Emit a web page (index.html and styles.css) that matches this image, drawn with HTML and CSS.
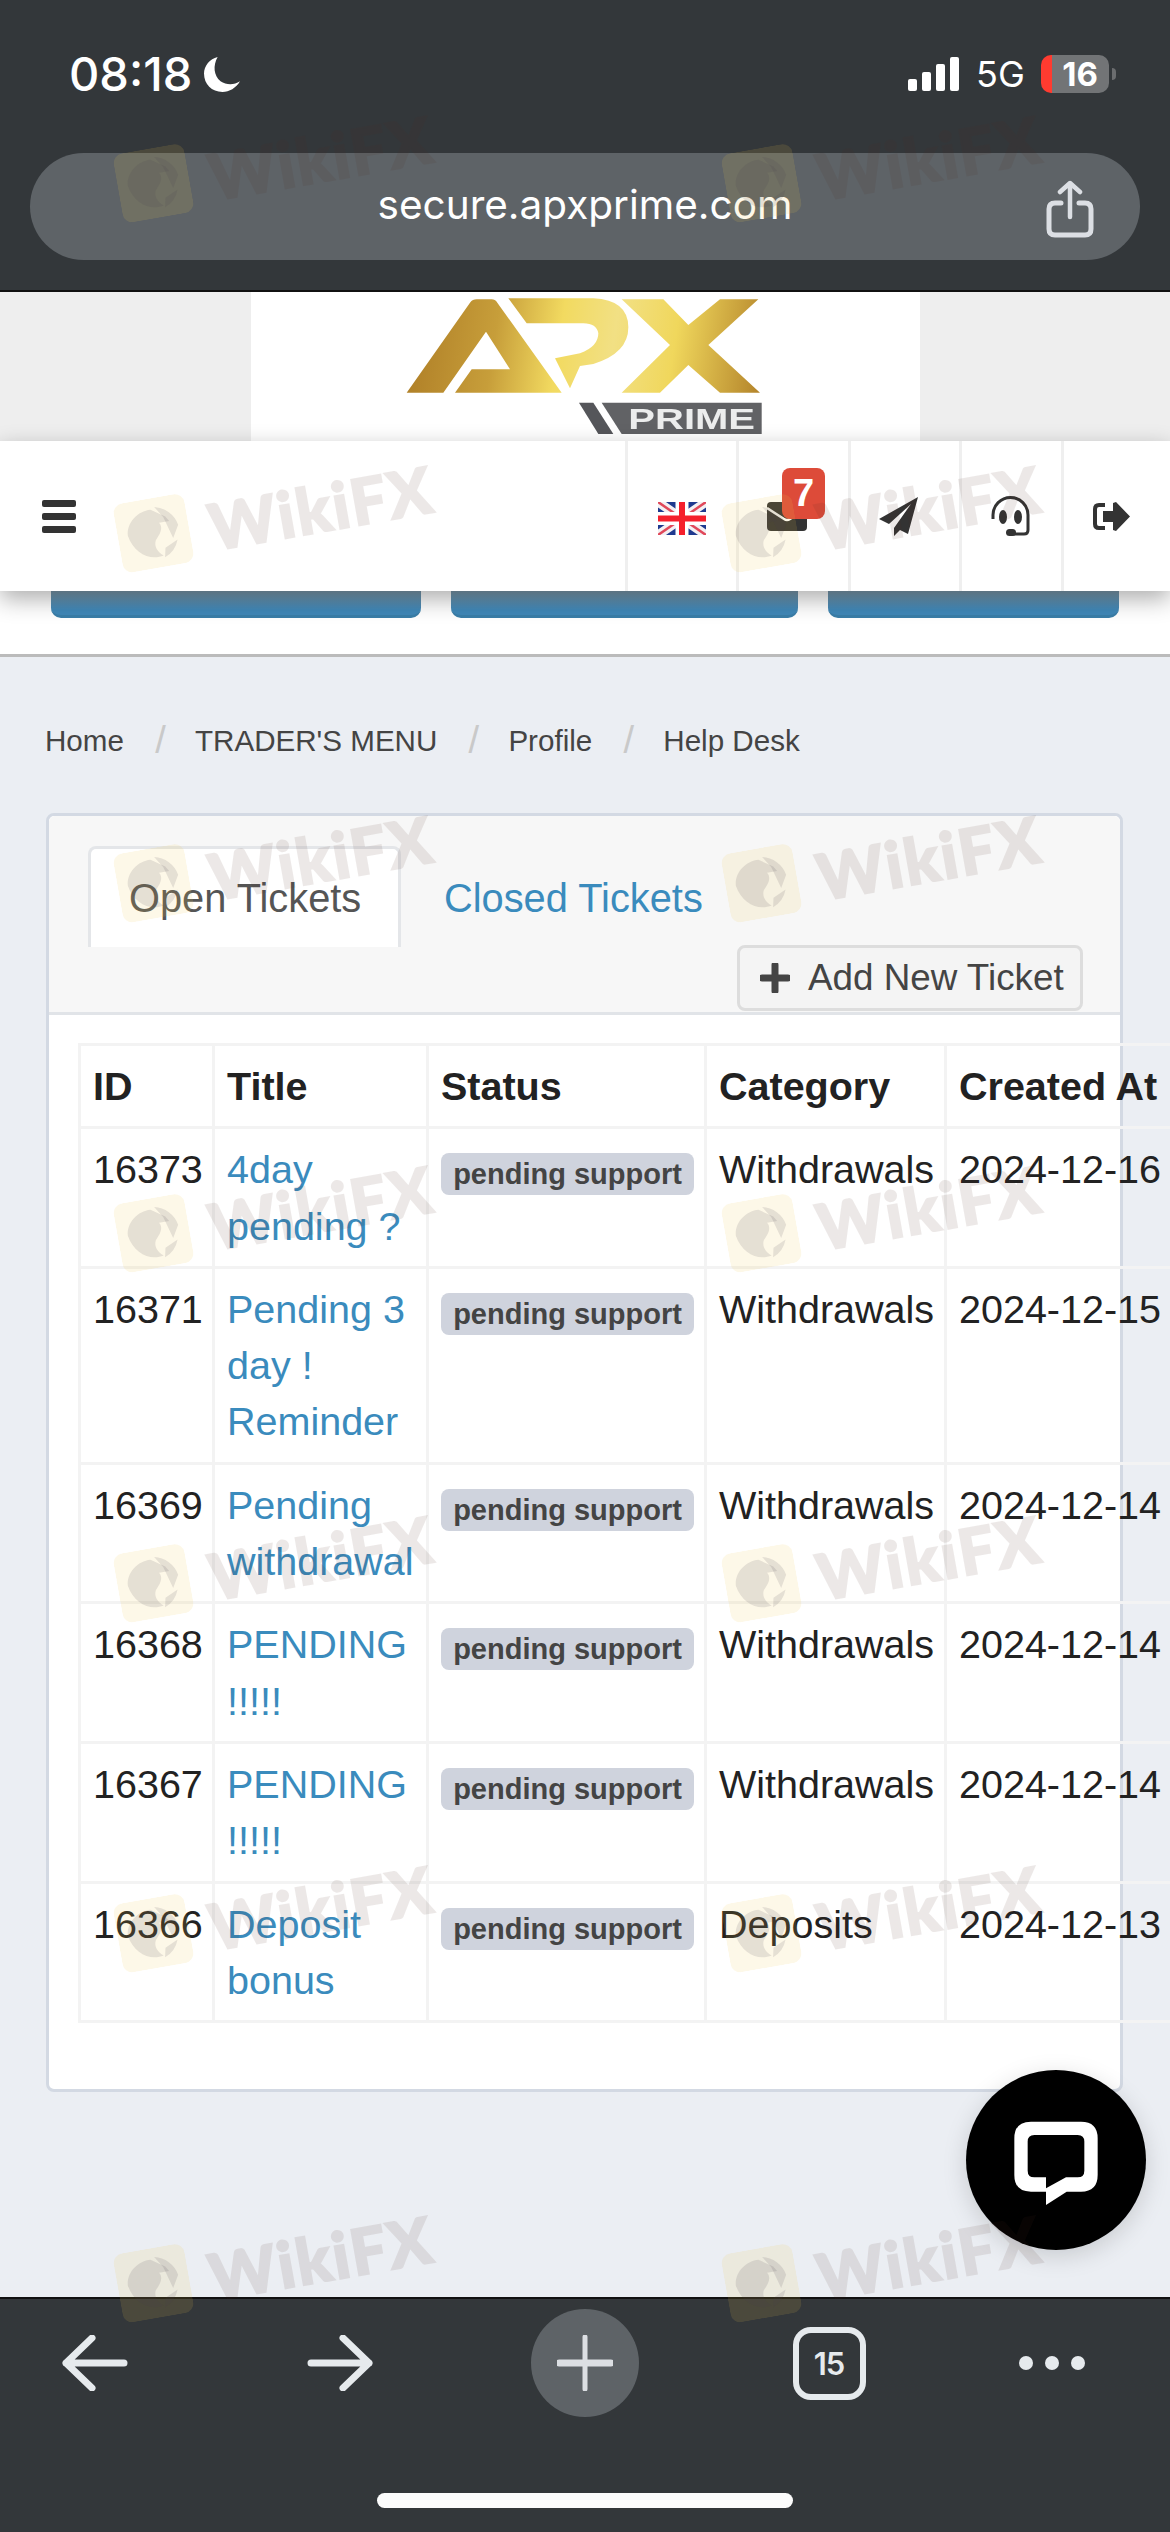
FILE: index.html
```html
<!DOCTYPE html>
<html lang="en">
<head>
<meta charset="utf-8">
<title>Help Desk</title>
<link rel="stylesheet" href="styles.css">
</head>
<body>
<svg class="defs" width="0" height="0" aria-hidden="true">
  <defs>
    <linearGradient id="gold" gradientUnits="userSpaceOnUse" x1="80" y1="100" x2="1140" y2="260">
      <stop offset="0" stop-color="#ae7d26"/>
      <stop offset="0.25" stop-color="#c79e3a"/>
      <stop offset="0.43" stop-color="#f2da60"/>
      <stop offset="0.58" stop-color="#f2e084"/>
      <stop offset="0.75" stop-color="#f0d75c"/>
      <stop offset="1" stop-color="#b5862c"/>
    </linearGradient>
    <symbol id="eagle" viewBox="0 0 70 68">
      <rect x="0" y="0" width="70" height="68" rx="10" class="wm-badge"/>
      <path class="wm-mark" d="M10 32C11 19 24 10 36 11L49 20L52 25L42 25C46 31 40 37 36 41C33 47 36 53 41 57C27 60 13 50 10 32Z"/>
      <path class="wm-mark" d="M40 9A26 26 0 0 1 60 30L53 42L47 20Z"/>
      <path class="wm-mark" d="M44 50L57 44A26 26 0 0 1 42 59Z"/>
    </symbol>
  </defs>
</svg>
<div class="page">
  <header class="browser-top">
    <div class="status">
      <div class="status-left">
        <span class="time">08:18</span>
        <svg class="moon" viewBox="0 0 37 36"><path d="M14 0C9 9 10 19 17 25C23 29 31 29 37 25C33 32 26 36 19 36C8 36 0 28 0 17C0 9 6 2 14 0Z"/></svg>
      </div>
      <div class="status-right">
        <span class="signal"><i class="b1"></i><i class="b2"></i><i class="b3"></i><i class="b4"></i></span>
        <span class="net">5G</span>
        <span class="battery"><span class="battery-num">16</span></span>
        <span class="battery-nub"></span>
      </div>
    </div>
    <div class="urlbar">
      <span></span>
      <span class="url">secure.apxprime.com</span>
      <svg class="share" viewBox="0 0 48 58"><path d="M15 23H9Q3 23 3 29V49Q3 55 9 55H39Q45 55 45 49V29Q45 23 39 23H33" fill="none" stroke="#dcdfe4" stroke-width="5" stroke-linecap="round"/><path d="M24 37V4M14 12L24 3L34 12" fill="none" stroke="#dcdfe4" stroke-width="4.5" stroke-linecap="round" stroke-linejoin="round"/></svg>
    </div>
  </header>

  <div class="logo-strip">
    <div class="logo-box">
      <svg class="logo" viewBox="0 6 1200 447">
        <path fill="url(#gold)" d="M80 308L270 38Q278 28 290 28H335Q345 28 352 38L545 308H225L275 238H390L318 125L190 308Z"/>
        <path fill="url(#gold)" d="M385 25H640Q745 30 745 112Q745 190 640 222L600 228L570 295L525 205L600 190Q655 170 655 130Q650 100 610 100H440Z"/>
        <path fill="url(#gold)" d="M725 28H850L925 105L1020 28H1135L985 165L1140 308H1020L925 225L840 308H725L870 165Z"/>
        <path fill="#55565a" d="M597 338H640L700 432H655Z"/>
        <path fill="#616265" d="M665 338H1145V432H725Z"/>
        <text class="logo-prime" x="745" y="418" textLength="380" lengthAdjust="spacingAndGlyphs">PRIME</text>
      </svg>
    </div>
  </div>

  <nav class="topnav">
    <div class="burger"><i></i><i></i><i></i></div>
    <div class="nav-cell cell-flag">
      <svg class="flag" viewBox="0 0 48 33" preserveAspectRatio="none">
        <rect width="48" height="33" fill="#1f3a8f"/>
        <path d="M0 0L48 33M48 0L0 33" stroke="#f4f0f2" stroke-width="9"/>
        <path d="M0 0L48 33M48 0L0 33" stroke="#e0485a" stroke-width="2.5"/>
        <path d="M24 0V33M0 16.5H48" stroke="#fff" stroke-width="13"/>
        <path d="M24 0V33M0 16.5H48" stroke="#f5202c" stroke-width="6"/>
      </svg>
    </div>
    <div class="nav-cell cell-mail">
      <svg class="i-mail" viewBox="0 0 40 29"><rect width="40" height="29" rx="4" fill="#333"/><path d="M0 6L17 17Q20 19 23 17L40 6" fill="none" stroke="#fff" stroke-width="2.5"/></svg>
      <span class="badge">7</span>
    </div>
    <div class="nav-cell cell-plane">
      <svg class="i-plane" viewBox="0 0 39 39"><path fill="#333" d="M39 0L0 22L10 27L32 7L15 31V39L21 33L29 37Z"/></svg>
    </div>
    <div class="nav-cell cell-head">
      <svg class="i-head" viewBox="0 0 39 40"><path d="M2 23V19A17.500 17.500 0 0 1 37 19V34Q37 38 33 38H22" fill="none" stroke="#333" stroke-width="3"/><ellipse cx="12" cy="21" rx="4" ry="7" fill="#333"/><ellipse cx="27" cy="21" rx="4" ry="7" fill="#333"/><rect x="15" y="33" width="10" height="7" rx="3.500" fill="#333"/></svg>
    </div>
    <div class="nav-cell cell-out">
      <svg class="i-out" viewBox="0 0 38 29"><path d="M13 3H7Q3 3 3 7V22Q3 26 7 26H13" fill="none" stroke="#333" stroke-width="4"/><path fill="#333" d="M11 9H21V1L24 0L38 14.500L24 29L21 28V20H11Z"/></svg>
    </div>
  </nav>

  <div class="btn-strip">
    <span class="blue-btn w1"></span>
    <span class="blue-btn w2"></span>
    <span class="blue-btn w3"></span>
  </div>

  <main class="main">
    <ol class="crumbs">
      <li>Home</li><li class="sep">/</li>
      <li>TRADER'S MENU</li><li class="sep">/</li>
      <li>Profile</li><li class="sep">/</li>
      <li>Help Desk</li>
    </ol>

    <section class="card">
      <div class="card-head">
        <div class="tabs">
          <a class="tab tab-active">Open Tickets</a>
          <a class="tab tab-link">Closed Tickets</a>
        </div>
        <button class="add-btn">
          <svg class="i-plus" viewBox="0 0 30 30"><path d="M15 2V28M2 15H28" stroke="#444" stroke-width="7" stroke-linecap="round"/></svg>
          <span>Add New Ticket</span>
        </button>
      </div>
      <div class="card-body">
        <table class="tickets">
          <thead>
            <tr><th class="c-id">ID</th><th class="c-title">Title</th><th class="c-status">Status</th><th class="c-cat">Category</th><th class="c-date">Created At</th></tr>
          </thead>
          <tbody>
            <tr><td>16373</td><td><a>4day pending ?</a></td><td><span class="label">pending support</span></td><td>Withdrawals</td><td>2024-12-16</td></tr>
            <tr><td>16371</td><td><a>Pending 3 day ! Reminder</a></td><td><span class="label">pending support</span></td><td>Withdrawals</td><td>2024-12-15</td></tr>
            <tr><td>16369</td><td><a>Pending withdrawal</a></td><td><span class="label">pending support</span></td><td>Withdrawals</td><td>2024-12-14</td></tr>
            <tr><td>16368</td><td><a>PENDING !!!!!</a></td><td><span class="label">pending support</span></td><td>Withdrawals</td><td>2024-12-14</td></tr>
            <tr><td>16367</td><td><a>PENDING !!!!!</a></td><td><span class="label">pending support</span></td><td>Withdrawals</td><td>2024-12-14</td></tr>
            <tr><td>16366</td><td><a>Deposit bonus</a></td><td><span class="label">pending support</span></td><td>Deposits</td><td>2024-12-13</td></tr>
          </tbody>
        </table>
      </div>
    </section>
  </main>

  <footer class="browser-bottom">
    <div class="toolbar">
      <svg class="i-arrow" viewBox="0 0 66 56"><path d="M62 28H4M30 3L4 28L30 53" fill="none" stroke="#e6eaed" stroke-width="7" stroke-linecap="round" stroke-linejoin="round"/></svg>
      <svg class="i-arrow" viewBox="0 0 66 56"><path d="M4 28H62M36 3L62 28L36 53" fill="none" stroke="#e6eaed" stroke-width="7" stroke-linecap="round" stroke-linejoin="round"/></svg>
      <span class="new-tab"><svg class="i-newtab" viewBox="0 0 56 56"><path d="M28 2V54" stroke="#dcdfe3" stroke-width="5" stroke-linecap="round"/><path d="M2 28H54" stroke="#dcdfe3" stroke-width="7" stroke-linecap="round"/></svg></span>
      <span class="tabs-count">15</span>
      <span class="dots"><i></i><i></i><i></i></span>
    </div>
    <div class="home-bar"></div>
  </footer>

  <a class="chat-fab">
    <svg class="i-chat" viewBox="18 30 540 540"><path fill="#fff" fill-rule="evenodd" d="M213 185H363Q413 185 413 235V345Q413 395 363 395H320L258 435V395H213Q163 395 163 345V235Q163 185 213 185ZM223 225Q203 225 203 245V332Q203 352 223 352H258V385L318 352H353Q373 352 373 332V245Q373 225 353 225Z"/></svg>
  </a>

  <div class="watermarks" aria-hidden="true">
    <div class="wm"><svg class="wm-logo"><use href="#eagle"/></svg><span class="wm-text">WikiFX</span></div>
    <div class="wm"><svg class="wm-logo"><use href="#eagle"/></svg><span class="wm-text">WikiFX</span></div>
    <div class="wm"><svg class="wm-logo"><use href="#eagle"/></svg><span class="wm-text">WikiFX</span></div>
    <div class="wm"><svg class="wm-logo"><use href="#eagle"/></svg><span class="wm-text">WikiFX</span></div>
    <div class="wm"><svg class="wm-logo"><use href="#eagle"/></svg><span class="wm-text">WikiFX</span></div>
    <div class="wm"><svg class="wm-logo"><use href="#eagle"/></svg><span class="wm-text">WikiFX</span></div>
    <div class="wm"><svg class="wm-logo"><use href="#eagle"/></svg><span class="wm-text">WikiFX</span></div>
    <div class="wm"><svg class="wm-logo"><use href="#eagle"/></svg><span class="wm-text">WikiFX</span></div>
    <div class="wm"><svg class="wm-logo"><use href="#eagle"/></svg><span class="wm-text">WikiFX</span></div>
    <div class="wm"><svg class="wm-logo"><use href="#eagle"/></svg><span class="wm-text">WikiFX</span></div>
    <div class="wm"><svg class="wm-logo"><use href="#eagle"/></svg><span class="wm-text">WikiFX</span></div>
    <div class="wm"><svg class="wm-logo"><use href="#eagle"/></svg><span class="wm-text">WikiFX</span></div>
    <div class="wm"><svg class="wm-logo"><use href="#eagle"/></svg><span class="wm-text">WikiFX</span></div>
    <div class="wm"><svg class="wm-logo"><use href="#eagle"/></svg><span class="wm-text">WikiFX</span></div>
  </div>
</div>
</body>
</html>
```
FILE: styles.css
```css
* { box-sizing: border-box; }
html, body { margin: 0; padding: 0; }
body { width: 1170px; height: 2532px; overflow: hidden; font-family: "Liberation Sans", Arial, sans-serif; background: #ebeef3; color: #222; }
.defs { position: absolute; }
.page { position: relative; width: 1170px; height: 2532px; overflow: hidden; display: flex; flex-direction: column; }

/* browser top */
.browser-top { height: 292px; background: #33373a; border-bottom: 2px solid #111; padding: 0 30px; flex: none; }
.status { height: 153px; padding: 55px 24px 0 39px; display: flex; justify-content: space-between; align-items: flex-start; font-family: Inter, "Liberation Sans", sans-serif; color: #fff; }
.status-left { display: flex; align-items: center; gap: 12px; height: 38px; }
.time { font-size: 47px; font-weight: 500; line-height: 38px; letter-spacing: 0; }
.moon { width: 36px; height: 35px; fill: #fff; }
.status-right { display: flex; align-items: center; height: 38px; }
.signal { display: flex; align-items: flex-end; gap: 5px; height: 34px; margin-right: 17px; }
.signal i { display: block; width: 9px; background: #fff; border-radius: 2px; }
.b1 { height: 12px; } .b2 { height: 19px; } .b3 { height: 27px; } .b4 { height: 34px; }
.net { font-size: 36px; font-weight: 400; line-height: 38px; width: 65px; }
.battery { display: flex; width: 68px; height: 38px; border-radius: 10px; background: linear-gradient(90deg, #ff3b30 11px, #727476 11px); justify-content: center; align-items: center; padding-left: 10px; }
.battery-num { font-size: 33px; font-weight: 700; line-height: 38px; }
.battery-nub { width: 4px; height: 12px; margin-left: 3px; background: #6b6d6f; border-radius: 0 4px 4px 0; }
.urlbar { height: 107px; border-radius: 54px; background: #5e6367; display: grid; grid-template-columns: 1fr auto 1fr; align-items: center; color: #fff; }
.url { font-family: Inter, "Liberation Sans", sans-serif; font-size: 40.500px; line-height: 96px; height: 100px; }
.share { width: 48px; height: 58px; justify-self: end; margin-right: 46px; margin-top: 5px; }

/* logo */
.logo-strip { height: 149px; background: #eee; flex: none; display: flex; justify-content: center; }
.logo-box { width: 669px; height: 149px; background: #fff; padding-left: 129px; }
.logo { display: block; width: 400px; height: 149px; filter: blur(.5px); }
.logo-prime { font-family: "Liberation Sans", sans-serif; font-weight: 700; font-size: 88px; fill: #eceded; }

/* nav */
.topnav { height: 150px; background: #fff; flex: none; display: flex; position: relative; z-index: 3; box-shadow: 0 8px 22px rgba(0,0,0,.32); }
.burger { flex: 1; padding: 59px 0 0 42px; display: flex; flex-direction: column; gap: 6px; }
.burger i { display: block; width: 34px; height: 7px; background: #333; border-radius: 2px; }
.nav-cell { position: relative; display: flex; align-items: center; justify-content: center; border-left: 3px solid #efefef; }
.cell-flag { width: 111px; }
.cell-mail { width: 112px; padding-right: 13px; }
.cell-plane { width: 111px; padding-right: 14px; }
.cell-head { width: 102px; padding-right: 3px; }
.cell-out { width: 109px; padding-right: 12px; }
.flag { width: 48px; height: 33px; filter: blur(.4px); margin-top: 5px; }
.i-mail { width: 40px; height: 29px; }
.badge { position: absolute; left: 43px; top: 27px; width: 43px; height: 51px; border-radius: 8px; background: #dd4b39; color: #fff; font-weight: 700; font-size: 38px; line-height: 51px; text-align: center; }
.i-plane { width: 39px; height: 39px; }
.i-head { width: 39px; height: 40px; }
.i-out { width: 38px; height: 29px; }

/* buttons peeking under nav */
.btn-strip { height: 66px; background: #fff; border-bottom: 3px solid #bbb; flex: none; display: flex; gap: 30px; padding-left: 51px; }
.blue-btn { display: block; height: 27px; border-radius: 0 0 10px 10px; background: linear-gradient(#7a98ab, #4088b8 80%); border-bottom: 3px solid #3a7ea8; }
.w1 { width: 370px; } .w2 { width: 347px; } .w3 { width: 291px; }

/* main */
.main { flex: 1; position: relative; }
.crumbs { list-style: none; margin: 0; padding: 0 0 0 45px; height: 156px; display: flex; align-items: center; padding-top: 11px; font-size: 29.600px; color: #444; }
.sep { width: 71px; text-align: center; color: #c9c9c9; font-size: 38px; padding-left: 2px; }

.card { margin-left: 46px; width: 1077px; height: 1279px; border: 3px solid #d3d9e3; border-radius: 8px; background: #fff; }
.card-head { height: 199px; background: #f7f7f7; border-bottom: 3px solid #e1e4e8; border-radius: 6px 6px 0 0; display: flex; flex-direction: column; }
.tabs { display: flex; margin: 30px 0 0 39px; height: 101px; flex: none; font-size: 39.800px; line-height: 99px; }
.tab { display: block; height: 101px; }
.tab-active { width: 313px; background: #fff; border: 3px solid #e4e6e9; border-bottom: 0; border-radius: 8px 8px 0 0; padding-left: 38px; color: #555; }
.tab-link { margin-left: 43px; color: #3a8bbd; line-height: 105px; }
.add-btn { align-self: flex-end; margin: -2px 37px 0 0; width: 346px; height: 66px; display: flex; align-items: center; gap: 18px; padding: 0 0 0 20px; background: #f4f4f4; border: 3px solid #ddd; border-radius: 8px; font-family: "Liberation Sans", sans-serif; font-size: 36.800px; color: #444; }
.i-plus { width: 30px; height: 30px; flex: none; }
.card-body { padding: 28px 0 0 29px; }

/* table */
.tickets { border-collapse: collapse; table-layout: fixed; width: 1166px; font-size: 39.500px; line-height: 56.300px; }
.tickets th, .tickets td { border: 3px solid #f3f3f3; padding: 12px 10px 12px 12px; text-align: left; vertical-align: top; }
.tickets th { font-weight: 700; color: #222; }
.tickets a { color: #3a8bbd; }
.c-id { width: 134px; }
.c-title { width: 214px; }
.c-status { width: 278px; }
.c-cat { width: 240px; }
.c-date { width: 300px; }
.label { display: block; width: 253px; height: 42px; margin-top: 12px; border-radius: 8px; background: #cfd3dd; color: #444; font-size: 29px; font-weight: 700; line-height: 42px; text-align: center; }

/* bottom */
.browser-bottom { height: 235px; background: #33373a; border-top: 2px solid #111; flex: none; position: relative; z-index: 2; }
.toolbar { height: 118px; display: grid; grid-template-columns: 190px 300px 190px 298px 148px; align-items: center; justify-items: center; padding-top: 10px; }
.i-arrow { width: 66px; height: 56px; }
.new-tab { width: 108px; height: 108px; border-radius: 50%; background: #5e6367; display: flex; align-items: center; justify-content: center; }
.i-newtab { width: 56px; height: 56px; }
.tabs-count { width: 73px; height: 73px; border: 6px solid #e6eaed; border-radius: 18px; color: #e6eaed; font-family: Inter, sans-serif; font-weight: 600; font-size: 31px; line-height: 61px; text-align: center; letter-spacing: -1px; }
.dots { display: flex; gap: 12px; }
.dots i { display: block; width: 14px; height: 14px; border-radius: 50%; background: #e6eaed; }
.home-bar { width: 416px; height: 15px; margin: 76px auto 0; border-radius: 8px; background: #fcfcfc; }

/* chat */
.chat-fab { position: absolute; left: 966px; top: 2070px; width: 180px; height: 180px; border-radius: 50%; background: #000; box-shadow: 0 6px 24px rgba(0,0,0,.15); z-index: 4; }
.i-chat { display: block; width: 180px; height: 180px; }

/* watermark */
.watermarks { position: absolute; left: 112px; top: 155px; z-index: 5; display: grid; grid-template-columns: 608px 608px; grid-auto-rows: 350px; pointer-events: none; }
.wm { display: flex; align-items: flex-start; width: 400px; height: 100px; transform: rotate(-10deg); transform-origin: 0 0; }
.wm-logo { width: 72px; height: 70px; flex: none; }
.wm-badge { fill: rgba(240,200,80,.13); }
.wm-mark { fill: rgba(70,60,75,.13); }
.wm-text { margin: 6px 0 0 20px; font-family: Lato, "Open Sans", sans-serif; font-weight: 900; font-size: 64px; line-height: 66px; letter-spacing: 2px; color: rgb(80,45,35); -webkit-text-stroke: 2px rgb(80,45,35); opacity: .1; }
```
